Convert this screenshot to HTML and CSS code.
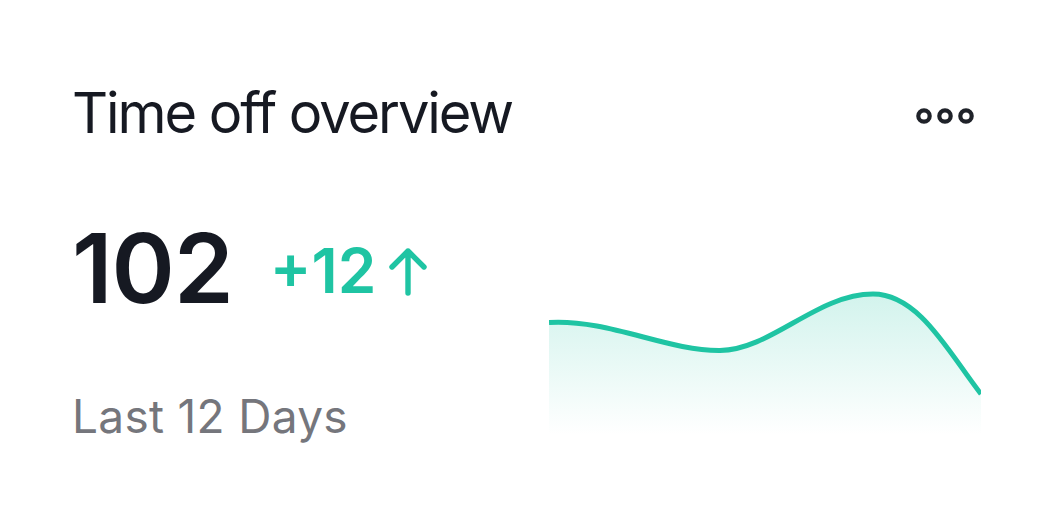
FILE: index.html
```html
<!DOCTYPE html>
<html lang="en">
<head>
<meta charset="utf-8">
<title>Time off overview</title>
<link rel="stylesheet" href="styles.css">
</head>
<body>
<div class="card">
  <div class="card-header">
    <h2 class="title">Time off overview</h2>
    <button class="more" aria-label="More">
      <svg width="62" height="20" viewBox="0 0 62 20">
        <circle cx="9" cy="10" r="5.7" fill="none" stroke="#1f2229" stroke-width="4.2"/>
        <circle cx="30" cy="10" r="5.7" fill="none" stroke="#1f2229" stroke-width="4.2"/>
        <circle cx="51" cy="10" r="5.7" fill="none" stroke="#1f2229" stroke-width="4.2"/>
      </svg>
    </button>
  </div>
  <div class="card-body">
    <div class="stats">
      <div class="value-row">
        <span class="value">102</span>
        <span class="delta">+12
          <svg class="arrow" width="40" height="52" viewBox="0 0 40 52">
            <path d="M20 47 V5 M4 21 L20 5 L36 21" fill="none" stroke="#1fc4a3" stroke-width="5.4" stroke-linecap="round" stroke-linejoin="round"/>
          </svg>
        </span>
      </div>
      <div class="period">Last 12 Days</div>
    </div>
    <div class="chart">
      <svg width="432" height="150" viewBox="0 0 432 150">
        <defs>
          <linearGradient id="fillGrad" x1="0" y1="0" x2="0" y2="1">
            <stop offset="0" stop-color="#1fc4a3" stop-opacity="0.2"/>
            <stop offset="1" stop-color="#1fc4a3" stop-opacity="0"/>
          </linearGradient>
        </defs>
        <path d="M0,37.5 C60,34 118,66 171,65.5 C222,65 268,9 324,9 C370,9 400,68 432,109 L432,150 L0,150 Z" fill="url(#fillGrad)"/>
        <path d="M0,37.5 C60,34 118,66 171,65.5 C222,65 268,9 324,9 C370,9 400,68 432,109" fill="none" stroke="#1fc4a3" stroke-width="5"/>
      </svg>
    </div>
  </div>
</div>
</body>
</html>
```

FILE: styles.css
```css
* { box-sizing: border-box; }
html, body { margin: 0; padding: 0; background: #ffffff; }
body {
  font-family: Inter, "Liberation Sans", sans-serif;
  width: 1053px;
  height: 525px;
  overflow: hidden;
}
.card {
  padding: 77px 72px 0 72px;
}
.card-header {
  display: flex;
  justify-content: space-between;
  align-items: center;
  height: 72px;
}
.title {
  margin: 0;
  font-size: 56px;
  font-weight: 400;
  color: #161922;
  letter-spacing: -2.1px;
  line-height: 72px;
}
.more {
  border: 0;
  background: none;
  padding: 0;
  margin-top: 5px;
  margin-right: 4px;
  display: flex;
}
.card-body {
  display: flex;
  justify-content: space-between;
  margin-top: 71px;
}
.stats {
  display: flex;
  flex-direction: column;
}
.value-row {
  display: flex;
  align-items: flex-start;
  gap: 37px;
  height: 96px;
}
.value {
  font-size: 96px;
  font-weight: 600;
  color: #161922;
  letter-spacing: -1px;
  line-height: 96px;
}
.delta {
  display: flex;
  align-items: flex-start;
  gap: 12px;
  margin-top: 20px;
  font-size: 62px;
  font-weight: 600;
  color: #1fc4a3;
  line-height: 62px;
}
.arrow {
  display: block;
  margin-top: 6px;
}
.period {
  margin-top: 72px;
  font-size: 46px;
  line-height: 56px;
  font-weight: 400;
  color: #75767c;
  letter-spacing: 0.3px;
}
.chart {
  margin-top: 65px;
  height: 150px;
}
.chart svg { display: block; }
```
